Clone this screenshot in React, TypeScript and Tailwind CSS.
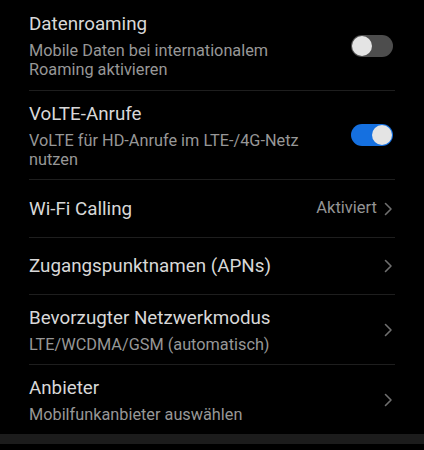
const Chevron = () => (
  <svg width="9" height="14" viewBox="0 0 9 14" fill="none" className="shrink-0">
    <path d="M1.5 1.5L7 7l-5.5 5.5" stroke="#6f6f6f" strokeWidth="1.6" strokeLinecap="round" strokeLinejoin="round" />
  </svg>
);

const Toggle = ({ on }: { on: boolean }) => (
  <div
    className={`w-[42px] h-[22px] rounded-full flex items-center px-[1px] shrink-0 ${
      on ? 'bg-[#1570e0] justify-end' : 'bg-[#4d4d4d] justify-start'
    }`}
  >
    <div className="w-[20px] h-[20px] rounded-full bg-[#e4e4e4]" />
  </div>
);

type RowProps = {
  title: string;
  subtitle?: string;
  right?: React.ReactNode;
  height: string;
  divider?: boolean;
};

const Row = ({ title, subtitle, right, height, divider = true }: RowProps) => (
  <div className={`flex items-center gap-4 ${height} ${divider ? 'border-b border-[#1e1e1e]' : ''}`}>
    <div className="flex-1 min-w-0">
      <div className="text-[18.8px] leading-[24px] text-[#d8d8d8]">{title}</div>
      {subtitle && (
        <div className="mt-[5px] text-[16.3px] leading-[19px] text-[#979797] pr-3">{subtitle}</div>
      )}
    </div>
    <div className="pr-[2px] flex items-center">{right}</div>
  </div>
);

export default function App() {
  return (
    <div className="w-[424px] h-[450px] bg-black overflow-hidden" style={{ fontFamily: 'Roboto, "Noto Sans", sans-serif' }}>
      <div className="px-[29px]">
        <Row
          height="h-[91px] pt-[1px]"
          title="Datenroaming"
          subtitle="Mobile Daten bei internationalem Roaming aktivieren"
          right={<Toggle on={false} />}
        />
        <Row
          height="h-[89px]"
          title="VoLTE-Anrufe"
          subtitle="VoLTE für HD-Anrufe im LTE-/4G-Netz nutzen"
          right={<Toggle on={true} />}
        />
        <Row
          height="h-[58px]"
          title="Wi-Fi Calling"
          right={
            <div className="flex items-center gap-[7px]">
              <span className="text-[16.5px] text-[#949494]">Aktiviert</span>
              <Chevron />
            </div>
          }
        />
        <Row height="h-[57px]" title="Zugangspunktnamen (APNs)" right={<Chevron />} />
        <Row
          height="h-[70px]"
          title="Bevorzugter Netzwerkmodus"
          subtitle="LTE/WCDMA/GSM (automatisch)"
          right={<Chevron />}
        />
        <Row
          height="h-[69px]"
          title="Anbieter"
          subtitle="Mobilfunkanbieter auswählen"
          right={<Chevron />}
          divider={false}
        />
      </div>
      <div className="h-[10px] bg-[#1c1c1c]" />
    </div>
  );
}
